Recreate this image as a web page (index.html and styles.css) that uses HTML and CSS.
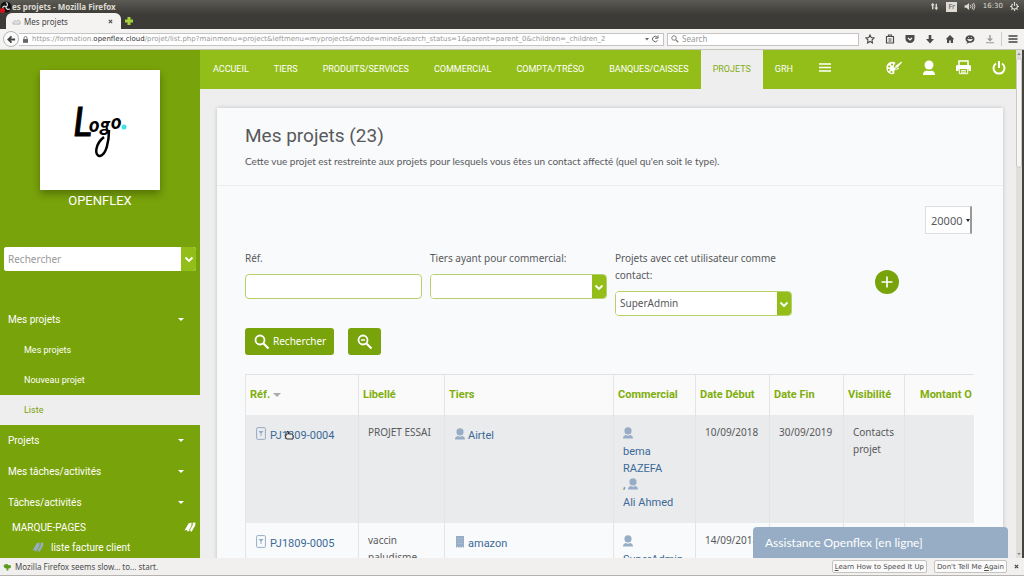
FILE: index.html
```html
<!DOCTYPE html>
<html lang="fr">
<head>
<meta charset="utf-8">
<title>Mes projets</title>
<link rel="stylesheet" href="styles.css">
</head>
<body>
<svg class="defs" aria-hidden="true">
  <symbol id="chev" viewBox="0 0 10 10"><path d="M1.500 3.500 5 7l3.500-3.500" fill="none" stroke="currentColor" stroke-width="1.800"/></symbol>
  <symbol id="user" viewBox="0 0 12 14"><circle cx="6" cy="4.500" r="4.300"/><path d="M0 13.500c0-3 2-3.500 3.500-4 1.500.9 3.500.9 5 0 1.500.5 3.500 1 3.500 4z"/></symbol>
  <symbol id="doc" viewBox="0 0 10 13"><rect x=".6" y=".6" width="8.800" height="11.800" rx="1" fill="none" stroke="currentColor"/><path d="M2.500 4h5L5.500 6.500V9h-1V6.500z"/></symbol>
  <symbol id="pages" viewBox="0 0 12 12"><path d="M.5 9.500 4.500 2.500 7.500 1.500 7.500 4.500 4 11 2.800 9z"/><path d="M5 10.500 8.700 4 8.700 1.800 11.500 1.500 11.200 4.500 7.500 11 6.500 9.500z"/></symbol>
  <symbol id="lens" viewBox="0 0 16 16"><circle cx="6" cy="6" r="4.500" fill="none" stroke="currentColor" stroke-width="1.800"/><path d="m9.500 9.500 5 5" stroke="currentColor" stroke-width="2.200"/></symbol>
</svg>

<header class="titlebar">
  <div class="title-row">
    <svg class="orb" viewBox="0 0 12 12"><circle cx="6" cy="6" r="5.500" fill="#111"/><path d="M6 1.500c2 1 2 3 0 4.500M10 8c-2 1-4 0-4-2M3 8c-1-2 1-4 3-2" fill="none" stroke="#ddd" stroke-width="1.200"/><circle cx="2.500" cy="9.500" r="2.500" fill="#d8131b"/></svg>
    <span class="win-title">es projets - Mozilla Firefox</span>
    <div class="tray">
      <svg viewBox="0 0 10 10" width="9" height="9"><path d="M3 8V3M7 2v5" stroke="currentColor" stroke-width="1.600"/><path d="M.8 4 3 .8 5.200 4zM4.800 6 7 9.200 9.200 6z"/></svg>
      <span class="kbd">Fr</span>
      <svg viewBox="0 0 12 10" width="12" height="9"><path d="M0 3.500h2L5 1v8L2 6.500H0z"/><path d="M6.500 3.200q1.200 1.800 0 3.600M8.300 2q2 3 0 6M10 1q2.800 4 0 8" fill="none" stroke="currentColor"/></svg>
      <span>16:30</span>
      <svg viewBox="0 0 10 10" width="9" height="9"><path d="M5 0v4.500M3 2.200a3.200 3.200 0 1 0 4 0M0 5h1.500M8.500 5H10M1.500 8.500l1-1M8.500 8.500l-1-1M5 8.500V10" fill="none" stroke="currentColor" stroke-width="1.300"/></svg>
    </div>
  </div>
  <div class="tab-row">
    <div class="tab">
      <svg viewBox="0 0 10 8" width="9" height="7"><path d="M1 7h8V4L7 2 5 4 3 3 1 5z" fill="#e3e3e3" stroke="#999" stroke-width=".7"/></svg>
      <span class="tab-name">Mes projets</span>
      <button class="plain" aria-label="Fermer l'onglet"><svg viewBox="0 0 6 6" width="5" height="5"><path d="m1 1 4 4M5 1 1 5" stroke="#555" stroke-width="1.500"/></svg></button>
    </div>
    <button class="plain newtab" aria-label="Nouvel onglet"><svg viewBox="0 0 8 8" width="8" height="8"><path d="M2.500 0h3v2.500H8v3H5.500V8h-3V5.500H0v-3h2.500z" fill="#a6d33c"/></svg></button>
  </div>
</header>

<div class="toolbar">
  <button class="back" aria-label="Retour"><svg viewBox="0 0 10 10" width="9" height="9"><path d="M9 5H2M5 1.500 1.500 5 5 8.500" fill="none" stroke="#444" stroke-width="2"/></svg></button>
  <div class="urlbar">
    <svg viewBox="0 0 6 8" width="5" height="7"><path d="M0 3.500h6V8H0z" fill="#666"/><path d="M1.200 4V2.200a1.800 1.800 0 0 1 3.600 0V4" fill="none" stroke="#666"/></svg>
    <span class="url">https://formation.<b>openflex.cloud</b>/projet/list.php?mainmenu=project&amp;leftmenu=myprojects&amp;mode=mine&amp;search_status=1&amp;parent=parent_0&amp;children=_children_2</span>
    <svg viewBox="0 0 14 8" width="14" height="8"><path d="M0 3h4L2 5.500z" fill="#666"/><path d="M12.500 2.500a2.700 2.700 0 1 0 0 3M13 .5v2.700h-3" fill="none" stroke="#666"/></svg>
  </div>
  <div class="findbar">
    <svg viewBox="0 0 16 16" width="8" height="8" color="#777"><use href="#lens"/></svg>
    <input type="text" placeholder="Search" aria-label="Search">
  </div>
  <div class="tools">
    <svg viewBox="0 0 10 10"><path d="m5 1 1.200 2.600 2.800.4-2 2 .5 2.900L5 7.500 2.500 8.900 3 6 1 4l2.800-.4z" fill="none" stroke="#4a4a4a" stroke-width="1.100"/></svg>
    <svg viewBox="0 0 10 10"><path d="M1.500 2.500h7v6.500h-7zM3.500 2.500V1h3v1.500M3.500 5h3M3.500 7h3" fill="none" stroke="#4a4a4a" stroke-width="1.200"/></svg>
    <svg viewBox="0 0 10 10"><path d="M.5 1h9v4a4.500 4 0 0 1-9 0z" fill="#4a4a4a"/><path d="M3 4l2 2 2-2" fill="none" stroke="#fff" stroke-width="1.200"/></svg>
    <svg viewBox="0 0 10 10"><path d="M3.700 1h2.600v4H9L5 9.500 1 5h2.700z" fill="#4a4a4a"/></svg>
    <svg viewBox="0 0 10 10"><path d="M5 1 .7 5.300H2V9h2.200V6.500h1.600V9H8V5.300h1.300z" fill="#4a4a4a"/></svg>
    <svg viewBox="0 0 10 10"><ellipse cx="5" cy="5" rx="4.500" ry="3.800" fill="#4a4a4a"/><path d="M2.500 8 1.200 9.700 5 8.500z" fill="#4a4a4a"/><path d="M2.500 5.500q2.500 3 5 0zM3 3.500h1.200M5.800 3.500H7" fill="#fff" stroke="#fff" stroke-width=".6"/></svg>
    <svg viewBox="0 0 10 10"><path d="M4.300 1h1.400v3.500H8L5 7.500l-3-3h2.300zM1 8.300h8v1H1z" fill="#999"/></svg>
    <i class="tool-sep"></i>
    <svg viewBox="0 0 10 10"><path d="M.5 2h9M.5 5h9M.5 8h9" stroke="#444" stroke-width="1.600"/></svg>
  </div>
</div>

<div class="app">
  <aside class="sidebar">
    <div class="brand">
      <div class="brand-pic">
        <svg viewBox="0 0 120 120" role="img" aria-label="Logo">
          <text class="brand-text"><tspan class="cap" x="33" y="66">L</tspan><tspan x="49" y="62">o</tspan><tspan x="60" y="62">g</tspan><tspan x="71" y="59">o</tspan></text>
          <path d="M69 60c0 12-3 25-9 26-6 0-5-12 4-19" fill="none" stroke="#000" stroke-width="2.500"/>
          <circle cx="84" cy="57" r="2.500" fill="#3fe0ea"/>
        </svg>
      </div>
      <div class="brand-name">OPENFLEX</div>
    </div>
    <div class="side-search combo">
      <input type="text" placeholder="Rechercher" aria-label="Rechercher">
      <button class="combo-btn" aria-label="Ouvrir"><svg width="10" height="10"><use href="#chev"/></svg></button>
    </div>
    <nav class="menu">
      <a href="#" class="item">Mes projets<i class="caret"></i></a>
      <a href="#" class="sub">Mes projets</a>
      <a href="#" class="sub">Nouveau projet</a>
      <a href="#" class="sub current">Liste</a>
      <a href="#" class="item">Projets<i class="caret"></i></a>
      <a href="#" class="item">Mes tâches/activités<i class="caret"></i></a>
      <a href="#" class="item">Tâches/activités<i class="caret"></i></a>
      <div class="marks">MARQUE-PAGES<svg width="12" height="12"><use href="#pages"/></svg></div>
      <a href="#" class="mark"><svg width="12" height="12"><use href="#pages"/></svg>liste facture client</a>
    </nav>
  </aside>

  <div class="page">
    <nav class="topnav">
      <a href="#">ACCUEIL</a>
      <a href="#">TIERS</a>
      <a href="#">PRODUITS/SERVICES</a>
      <a href="#">COMMERCIAL</a>
      <a href="#">COMPTA/TRÉSO</a>
      <a href="#">BANQUES/CAISSES</a>
      <a href="#" class="on">PROJETS</a>
      <a href="#">GRH</a>
      <button class="plain burger" aria-label="Menu"><svg viewBox="0 0 12 9" width="12" height="9"><path d="M0 1h12M0 4.500h12M0 8h12" stroke="currentColor" stroke-width="1.300"/></svg></button>
      <div class="top-icons">
        <button class="plain" aria-label="Thème"><svg viewBox="0 0 16 14" width="16" height="14"><path d="M8 1C3 0 0 3.500.5 8c.3 3.500 4 6 7 5 2-.8-.3-3 1.500-4 1.500-.8 4 .3 4-2.500L10 8 7.500 5.500 9.500 1.500z"/><path d="m8.500 7 1.500-2.500L15.500.5 16 1.500l-4.500 5z"/><g fill="#93be19"><circle cx="3.200" cy="5.500" r="1.100"/><circle cx="2.800" cy="8.800" r="1.100"/><circle cx="5.500" cy="11" r="1.100"/><circle cx="6" cy="3.500" r="1.100"/></g></svg></button>
        <button class="plain" aria-label="Utilisateur"><svg viewBox="0 0 12 15" width="12" height="15"><circle cx="6" cy="5" r="4.500"/><path d="M0 15c0-3.500 2-4 3.500-4.500 1.500.8 3.500.8 5 0C10 11 12 11.500 12 15z"/></svg></button>
        <button class="plain" aria-label="Imprimer"><svg viewBox="0 0 15 15" width="15" height="15"><path d="M3 5V1h9v4" fill="none" stroke="currentColor" stroke-width="1.500"/><path d="M0 6.500Q0 5 1.500 5h12Q15 5 15 6.500V11h-2.500V9h-10v2H0z"/><path d="M3.300 9v4.700h8.400V9M5 10.700h5M5 12.200h5" fill="none" stroke="currentColor"/></svg></button>
        <button class="plain" aria-label="Déconnexion"><svg viewBox="0 0 14 14" width="14" height="14"><path d="M7 0v7M4 2.500a5.500 5.500 0 1 0 6 0" fill="none" stroke="currentColor" stroke-width="2"/></svg></button>
      </div>
    </nav>

    <main class="card">
      <header class="card-head">
        <h1>Mes projets (23)</h1>
        <p>Cette vue projet est restreinte aux projets pour lesquels vous êtes un contact affecté (quel qu'en soit le type).</p>
      </header>
      <div class="card-body">
        <div class="limit"><div class="limit-box"><select aria-label="Nombre de lignes"><option>20000</option></select><i></i></div></div>
        <div class="filters">
          <div class="field"><label for="ref">Réf.</label><input id="ref" type="text" class="box"></div>
          <div class="field"><label for="com">Tiers ayant pour commercial:</label>
            <div class="combo box"><select id="com"><option></option></select><span class="combo-btn"><svg width="10" height="10"><use href="#chev"/></svg></span></div></div>
          <div class="field"><label for="usr">Projets avec cet utilisateur comme contact:</label>
            <div class="combo box"><select id="usr"><option>SuperAdmin</option></select><span class="combo-btn"><svg width="10" height="10"><use href="#chev"/></svg></span></div></div>
          <button class="add" aria-label="Ajouter"><svg viewBox="0 0 12 12" width="12" height="12"><path d="M6 .5v11M.5 6h11" stroke="currentColor" stroke-width="1.600"/></svg></button>
        </div>
        <div class="actions">
          <button class="btn"><svg width="16" height="16"><use href="#lens"/></svg>Rechercher</button>
          <button class="btn" aria-label="Réinitialiser"><svg viewBox="0 0 16 16" width="16" height="16"><use href="#lens"/><path d="M4 6h4" stroke="currentColor" stroke-width="1.500"/></svg></button>
        </div>
        <div class="table-wrap">
          <table>
            <colgroup><col class="c-ref"><col class="c-lib"><col class="c-tiers"><col class="c-com"><col class="c-date"><col class="c-date"><col class="c-vis"><col class="c-amount"></colgroup>
            <thead><tr><th>Réf.<i class="sort"></i></th><th>Libellé</th><th>Tiers</th><th>Commercial</th><th>Date Début</th><th>Date Fin</th><th>Visibilité</th><th class="amount">Montant O</th></tr></thead>
            <tbody>
              <tr class="odd">
                <td class="ref"><a href="#"><svg class="doc" width="10" height="13"><use href="#doc"/></svg>PJ1809-0004</a>
                  <svg class="hand" viewBox="0 0 10 10" width="10" height="10"><path d="M1 5h2V1.500h1.500V4H8l1 1v4H2.500z" fill="#eee" stroke="#333"/></svg></td>
                <td>PROJET ESSAI</td>
                <td class="tiers"><a href="#"><svg width="10" height="12"><use href="#user"/></svg>Airtel</a></td>
                <td class="com"><a href="#"><svg width="10" height="12"><use href="#user"/></svg><br>bema RAZEFA</a><br>, <a href="#"><svg width="10" height="12"><use href="#user"/></svg><br>Ali Ahmed</a></td>
                <td>10/09/2018</td><td>30/09/2019</td><td>Contacts projet</td><td></td>
              </tr>
              <tr>
                <td class="ref"><a href="#"><svg class="doc" width="10" height="13"><use href="#doc"/></svg>PJ1809-0005</a></td>
                <td>vaccin paludisme</td>
                <td class="tiers"><a href="#"><svg viewBox="0 0 10 12" width="10" height="12"><path d="M1 0h8v12L7.500 10.500 6 12l-1-1.500L4 12l-1.500-1.500L1 12z"/><path d="M2.500 2.500h5M2.500 5h5M2.500 7.500h5" stroke="#b9c9da" stroke-dasharray="1 1"/></svg>amazon</a></td>
                <td class="com"><a href="#"><svg width="10" height="12"><use href="#user"/></svg><br>SuperAdmin</a></td>
                <td>14/09/2018</td><td></td><td></td><td></td>
              </tr>
            </tbody>
          </table>
        </div>
      </div>
    </main>
    <button class="chat">Assistance Openflex [en ligne]</button>
  </div>
  <div class="scroll"><i class="arrow up"></i><span class="thumb"></span><i class="arrow down"></i></div>
</div>

<footer class="notice">
  <svg viewBox="0 0 10 8" width="9" height="8"><path d="M1 4q-1-3 2-3 2-1 3 1 3-1 3 2-1 2-3 1.500V8H4V5.500Q2 6 1 4z" fill="#5c9c1c"/></svg>
  <span>Mozilla Firefox seems slow… to… start.</span>
  <div class="notice-btns">
    <button><u>L</u>earn How to Speed It Up</button>
    <button>Don't Tell Me <u>A</u>gain</button>
    <button class="plain" aria-label="Fermer"><svg viewBox="0 0 6 6" width="5" height="5"><path d="m1 1 4 4M5 1 1 5" stroke="#444" stroke-width="1.400"/></svg></button>
  </div>
</footer>
</body>
</html>
```

FILE: styles.css
```css
* { box-sizing: border-box; }
body {
  margin: 0;
  height: 100vh;
  display: flex;
  flex-direction: column;
  overflow: hidden;
  background: #f1f0ef;
  color: #58595b;
  font: 10px/17px "Noto Sans", sans-serif;
}
svg { fill: currentColor; flex: none; }
a { color: inherit; text-decoration: none; }
button, input, select { font: inherit; color: inherit; margin: 0; }
.defs { position: absolute; width: 0; height: 0; }
.plain { background: none; border: 0; padding: 0; display: flex; align-items: center; }

/* Window frame */
.titlebar {
  background: linear-gradient(#5b5a53, #3c3b37 50%);
  color: #dfdbd2;
  font: 8px/13px "Noto Sans", sans-serif;
}
.title-row { display: flex; align-items: center; height: 13px; }
.orb { width: 12px; height: 12px; }
.win-title { font-weight: bold; }
.tray { margin-left: auto; display: flex; align-items: center; gap: 7px; padding-right: 5px; font-size: 7px; }
.tray span { font-family: "DejaVu Sans", sans-serif; }
.tray .kbd { background: #dfdbd2; color: #555; line-height: 10px; padding: 0 2px; }
.tab-row { display: flex; height: 16px; padding-left: 6px; }
.tab {
  display: flex;
  align-items: center;
  gap: 3px;
  width: 115px;
  padding: 0 8px 0 6px;
  background: #f4f3f2;
  border-radius: 6px 6px 0 0;
  color: #444;
}
.tab-name { flex: 1; }
.newtab { margin-left: 4px; }
.toolbar {
  display: flex;
  align-items: center;
  height: 21px;
  padding: 0 6px 0 3px;
  border-bottom: 1px solid #c5c4bb;
  background: #f4f3f2;
  font: 7px/12px "DejaVu Sans", sans-serif;
}
.back {
  display: flex;
  align-items: center;
  justify-content: center;
  width: 16px;
  height: 16px;
  padding: 0;
  border: 1px solid #b5b5b5;
  border-radius: 50%;
  background: #fbfbfb;
}
.urlbar, .findbar {
  display: flex;
  align-items: center;
  height: 13px;
  background: #fff;
  border: 1px solid #c4c4c4;
}
.urlbar { flex: 650; min-width: 0; gap: 4px; padding: 0 4px; color: #999; border-left: 0; }
.url { flex: 1; overflow: hidden; white-space: nowrap; }
.url b { font-weight: normal; color: #333; }
.findbar { flex: 188; min-width: 0; margin-left: 3px; padding: 0 3px; gap: 3px; font: 8px/12px "Noto Sans", sans-serif; }
.findbar input { width: 100%; border: 0; padding: 0; background: none; }
.findbar input::placeholder { color: #999; }
.tools { display: flex; align-items: center; gap: 10px; padding-left: 6px; }
.tools svg { width: 10px; height: 10px; }
.tool-sep { width: 1px; height: 14px; margin: 0 -4px; background: #ccc; }

/* Application */
.app { flex: 1; min-height: 0; display: flex; font-family: Roboto, sans-serif; }
.sidebar { width: 200px; flex: none; overflow: hidden; background: #79a30a; color: #fff; }
.brand { padding-top: 20px; text-align: center; }
.brand-pic { width: 120px; height: 120px; margin: 0 auto; background: #fff; box-shadow: 0 4px 8px rgba(0, 0, 0, .3); }
.brand-text { font: italic 900 20px Lato, sans-serif; fill: #000; }
.brand-text .cap { font-size: 40px; font-weight: 400; stroke: #000; }
.brand-name { font-size: 13px; line-height: 22px; }
.combo { position: relative; display: flex; overflow: hidden; background: #fff; border-radius: 3px; }
.combo input, .combo select { flex: 1; min-width: 0; border: 0; padding: 0 4px; background: #fff; appearance: none; }
.combo-btn { display: flex; align-items: center; justify-content: center; width: 15px; padding: 0; border: 0; background: #93be19; color: #fff; }
.side-search { height: 24px; margin: 35px 4px 33px; font: 10px/22px "Noto Sans", sans-serif; color: #555; }
.side-search input::placeholder { color: #999; }
.item, .sub, .marks, .mark { display: flex; align-items: center; }
.item { height: 31px; padding: 0 16px 0 8px; justify-content: space-between; }
.caret { border: 3px solid transparent; border-top-color: #fff; border-bottom: 0; }
.sub { height: 30px; padding-left: 24px; font-size: 9px; }
.current { background: #eee; color: #79a30a; }
.marks { height: 18px; padding: 0 4px 0 12px; justify-content: space-between; }
.mark { height: 22px; padding-left: 32px; gap: 7px; }
.mark svg { color: #96adc5; }

.page { position: relative; flex: 1; min-width: 0; display: flex; flex-direction: column; overflow: hidden; background: #eee; }
.topnav { display: flex; flex: none; height: 39px; background: #93be19; color: #fff; font-size: 9px; }
.topnav a { display: flex; align-items: center; padding: 0 12px 0 13px; }
.topnav .on { padding: 0 12px; background: #eee; color: #84ad12; }
.topnav .on + a { padding-left: 12px; }
.burger { margin: 0 0 4px 14px; }
.top-icons { display: flex; align-items: center; gap: 21px; margin-left: auto; padding: 0 10px 4px 0; }

.card { margin: 19px 13px 0 17px; background: #f9fafc; box-shadow: 0 0 4px rgba(0, 0, 0, .2); font-family: "Noto Sans", sans-serif; }
.card-head { padding: 16px 28px 15px; border-bottom: 1px solid #ecedef; }
h1 { margin: 0; font: 19px/24px Roboto, sans-serif; }
.card-head p { margin: 4px 0 0; font: 10px/18px Lato, sans-serif; }
.card-body { padding: 20px 29px 0 28px; }
.limit { display: flex; justify-content: flex-end; }
.limit-box { position: relative; width: 47px; height: 28px; margin-right: 2px; border: 1px solid #ddd; border-right: 2px solid #999; background: #fff; }
.limit select { width: 100%; height: 100%; padding: 0 5px; border: 0; background: none; appearance: none; font-size: 11px; }
.limit i { position: absolute; right: 0; top: 12px; border: 2px solid transparent; border-top: 3px solid #222; border-bottom: 0; }
.filters { display: flex; gap: 8px; margin-top: 16px; align-items: flex-start; }
.field { width: 177px; display: flex; flex-direction: column; gap: 7px; }
.box { width: 100%; height: 25px; border: 1px solid #b7d06c; border-radius: 4px; background: #fff; }
.combo.box { padding-right: 0; }
.box .combo-btn { width: 14px; }
.add { display: flex; align-items: center; justify-content: center; width: 24px; height: 24px; margin: 20px 0 0 75px; padding: 0; border: 0; border-radius: 50%; background: #79a30a; color: #fff; }
.actions { display: flex; gap: 14px; margin-top: 12px; }
.btn { display: flex; align-items: center; gap: 3px; height: 27px; padding: 0 8px 0 9px; border: 0; border-radius: 3px; background: #79a30a; color: #fff; }
.table-wrap { margin-top: 19px; overflow: hidden; }
table { width: 860px; border-collapse: collapse; table-layout: fixed; border: 1px solid #dfe1e3; }
.c-ref { width: 113px; }
.c-lib { width: 86px; }
.c-tiers { width: 169px; }
.c-com { width: 82px; }
.c-date { width: 74px; }
.c-vis { width: 61px; }
th, td { text-align: left; border-left: 1px solid #e2e4e6; }
th { height: 40px; padding: 0 4px; background: #fafafa; color: #7fae0c; font: bold 11px/17px Roboto, sans-serif; white-space: nowrap; }
th.amount { padding-left: 15px; }
.sort { display: inline-block; margin-left: 3px; border: 4px solid transparent; border-top-color: #aaa; border-bottom: 0; vertical-align: middle; }
td { height: 108px; padding: 9px 9px 0; vertical-align: top; }
.odd td { background: #eaebed; }
td a { color: #3b6a96; font: 11px/17px Roboto, sans-serif; }
td svg { color: #96adc5; vertical-align: -1px; }
td.ref, td.tiers { padding: 12px 10px 0; }
td.com { padding-top: 11px; }
.tiers svg { margin-right: 3px; }
.doc { margin-right: 4px; }
.ref { position: relative; }
.hand { position: absolute; left: 38px; top: 15px; }

.chat { position: absolute; right: 8px; bottom: 0; width: 255px; height: 31px; padding: 0 12px; border: 0; border-radius: 4px 4px 0 0; background: #96adc5; color: #fff; font: 12px/31px Lato, sans-serif; text-align: left; }
.scroll { display: flex; flex-direction: column; align-items: center; width: 8px; padding: 3px 0; background: #e0dfda; border-right: 2px solid #45443f; }
.thumb { width: 6px; height: 110px; margin-top: 3px; background: #f7f6f5; border: 1px solid #c9c8c4; border-radius: 3px; }
.arrow { border: 2px solid transparent; }
.up { border-bottom-color: #888; border-top: 0; }
.down { margin-top: auto; border-top-color: #888; border-bottom: 0; }

.notice { display: flex; align-items: center; gap: 3px; height: 18px; padding: 0 5px 0 3px; border-bottom: 1px solid #b5b4b0; background: #f1f0ee; color: #4c4c4c; font: 8px/12px "Noto Sans", sans-serif; }
.notice-btns { display: flex; align-items: center; gap: 7px; margin-left: auto; font: 7px/12px "DejaVu Sans", sans-serif; }
.notice-btns button:not(.plain) { height: 13px; padding: 0 2px; border: 1px solid #c4c3c0; border-radius: 2px; background: #fafafa; }
```
